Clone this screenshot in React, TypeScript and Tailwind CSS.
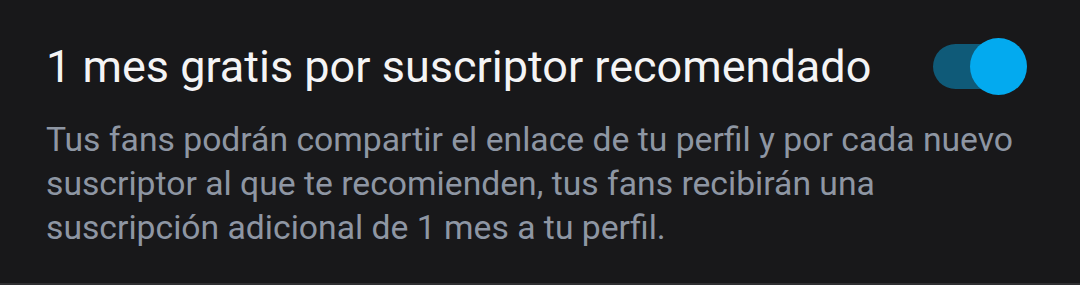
export default function App() {
  return (
    <div className="w-[1080px] h-[285px] bg-[#18181a] border-b-[2px] border-[#2f2f31] font-['Roboto',sans-serif] flex flex-col">
      <div className="flex items-center justify-between pl-[46px] pr-[53px] pt-[38px]">
        <h1 className="text-[45px] leading-[57px] text-[#f4f4f5] font-normal">
          1 mes gratis por suscriptor recomendado
        </h1>
        <div className="relative w-[94px] h-[57px] flex items-center">
          <div className="w-[80px] h-[45px] rounded-full bg-[#0f5a78]" />
          <div className="absolute right-0 top-0 w-[57px] h-[57px] rounded-full bg-[#03aaef]" />
        </div>
      </div>
      <p className="pl-[46px] pr-[50px] pt-[23px] text-[33.7px] leading-[44px] text-[#8e96a3]">
        Tus fans podrán compartir el enlace de tu perfil y por cada nuevo suscriptor al que te recomienden, tus fans recibirán una suscripción adicional de 1 mes a tu perfil.
      </p>
    </div>
  );
}
